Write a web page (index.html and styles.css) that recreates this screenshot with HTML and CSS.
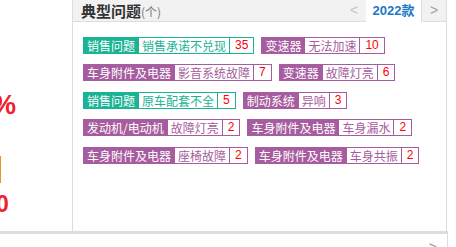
FILE: index.html
```html
<!DOCTYPE html>
<html lang="zh-CN">
<head>
<meta charset="utf-8">
<title>典型问题</title>
<link rel="stylesheet" href="styles.css">
</head>
<body>
<div class="page">
  <div class="top">
    <div class="side">
      <div class="pct">%</div>
      <div class="bar"></div>
      <div class="num">0</div>
    </div>
    <div class="main">
      <div class="head">
        <div class="title">典型问题<span class="unit">(个)</span></div>
        <div class="nav prev">&lt;</div>
        <div class="tab">2022款</div>
        <div class="nav next">&gt;</div>
      </div>
      <div class="tags">
        <div class="tag teal"><span class="cat">销售问题</span><span class="issue">销售承诺不兑现</span><span class="cnt">35</span></div>
        <div class="tag purple"><span class="cat">变速器</span><span class="issue">无法加速</span><span class="cnt">10</span></div>
        <div class="tag purple"><span class="cat">车身附件及电器</span><span class="issue">影音系统故障</span><span class="cnt">7</span></div>
        <div class="tag purple"><span class="cat">变速器</span><span class="issue">故障灯亮</span><span class="cnt">6</span></div>
        <div class="tag teal"><span class="cat">销售问题</span><span class="issue">原车配套不全</span><span class="cnt">5</span></div>
        <div class="tag purple"><span class="cat">制动系统</span><span class="issue">异响</span><span class="cnt">3</span></div>
        <div class="tag purple"><span class="cat">发动机/电动机</span><span class="issue">故障灯亮</span><span class="cnt">2</span></div>
        <div class="tag purple"><span class="cat">车身附件及电器</span><span class="issue">车身漏水</span><span class="cnt">2</span></div>
        <div class="tag purple"><span class="cat">车身附件及电器</span><span class="issue">座椅故障</span><span class="cnt">2</span></div>
        <div class="tag purple"><span class="cat">车身附件及电器</span><span class="issue">车身共振</span><span class="cnt">2</span></div>
      </div>
    </div>
  </div>
  <div class="rule"></div>
  <div class="foot"><span class="more">&gt;</span></div>
</div>
</body>
</html>
```

FILE: styles.css
```css
html, body {
  margin: 0;
  padding: 0;
}
body {
  width: 456px;
  height: 247px;
  overflow: hidden;
  background: #fff;
  font-family: "Noto Sans CJK SC", "Liberation Sans", sans-serif;
}
.top {
  display: flex;
  height: 231px;
}
.side {
  width: 73px;
  border-right: 1px solid #ddd;
  overflow: hidden;
  padding-top: 90px;
  box-sizing: border-box;
}
.pct {
  margin-left: -8px;
  font: bold 27px/30px "Liberation Sans", sans-serif;
  color: #f0212b;
}
.bar {
  width: 1px;
  height: 27px;
  margin-top: 36px;
  background: #f39022;
}
.num {
  margin-top: 8px;
  margin-left: -4px;
  font: bold 23px/26px "Liberation Sans Narrow", "Liberation Sans", sans-serif;
  color: #f0212b;
}
.main {
  width: 373px;
  border-right: 1px solid #ddd;
}
.head {
  display: flex;
  height: 22px;
}
.title {
  flex: 1;
  background: #f2f2f2;
  border-bottom: 1px solid #ddd;
  padding-left: 8px;
  font-size: 15px;
  line-height: 21px;
  font-weight: bold;
  color: #333;
}
.unit {
  font-size: 12px;
  font-weight: normal;
  color: #777;
}
.nav {
  background: #f2f2f2;
  border-bottom: 1px solid #ddd;
  font: 14px/21px "Liberation Sans", sans-serif;
}
.prev {
  width: 19px;
  padding-left: 3px;
  box-sizing: border-box;
  color: #c4c4c4;
}
.next {
  width: 25px;
  border-left: 1px solid #ddd;
  box-sizing: border-box;
  text-align: center;
  color: #a0a0a0;
}
.tab {
  width: 55px;
  background: #fff;
  text-align: center;
  font: bold 13px/21px "Liberation Sans", "Noto Sans CJK SC", sans-serif;
  color: #1b78c4;
}
.tags {
  display: flex;
  flex-wrap: wrap;
  align-content: flex-start;
  column-gap: 7px;
  row-gap: 10.5px;
  padding: 14.5px 0 0 10px;
}
.tag {
  display: flex;
  height: 17px;
  font-size: 12px;
  line-height: 15px;
}
.cat {
  padding: 0 4px;
  line-height: 17px;
  color: #fff;
}
.issue {
  padding: 0 3px;
  border: 1px solid;
  border-left: 0;
}
.cnt {
  padding: 0 5px;
  border: 1px solid;
  border-left: 0;
  color: #f00;
  font-family: "Liberation Sans", sans-serif;
}
.teal .cat { background: #1ab394; }
.teal .issue { color: #1ab394; border-color: #1ab394; }
.teal .cnt { border-color: #1ab394; }
.purple .cat { background: #a65c9e; }
.purple .issue { color: #a65c9e; border-color: #a65c9e; }
.purple .cnt { border-color: #a65c9e; }
.rule {
  width: 448px;
  height: 3px;
  background: #ddd;
}
.foot {
  width: 448px;
  height: 13px;
  border-right: 1px solid #ddd;
  box-sizing: border-box;
  display: flex;
  justify-content: flex-end;
}
.more {
  padding: 4.7px 10px 0 0;
  font: 14px/16px "Liberation Sans", sans-serif;
  color: #999;
}
```
